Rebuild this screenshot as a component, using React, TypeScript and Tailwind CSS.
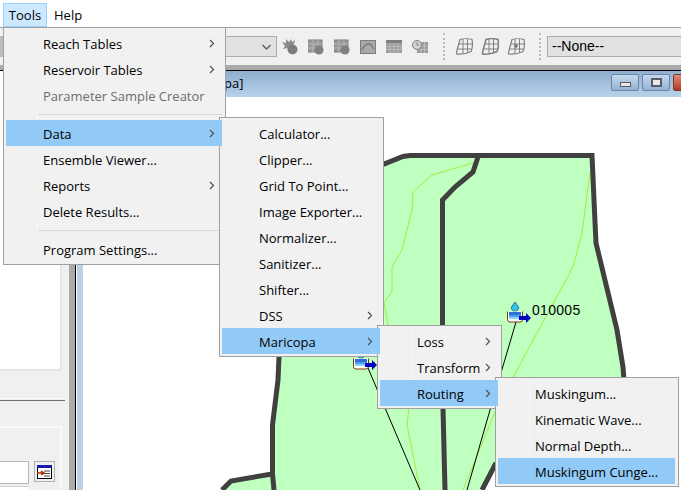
import React from "react";

const FONT = "font-['Open_Sans',sans-serif]";

function Chevron() {
  return (
    <svg width="6" height="9" viewBox="0 0 6 9" className="shrink-0">
      <polyline points="1,1 4.5,4.5 1,8" fill="none" stroke="#505050" strokeWidth="1.2" />
    </svg>
  );
}

type Item = { label?: string; sub?: boolean; active?: boolean; disabled?: boolean; sep?: boolean };

function Menu({ items, className }: { items: Item[]; className: string }) {
  return (
    <div className={`absolute border border-[#a0a0a0] bg-[#f1f1f1] pt-[2px] pb-[2px] pl-[2px] pr-[2px] ${className}`}>
      <div className="absolute left-[33px] top-[1px] bottom-[1px] w-px bg-[#f6f6f6]" />
      {items.map((it, i) =>
        it.sep ? (
          <div key={i} className="h-[12px] flex items-center pl-[32px]">
            <div className="h-px w-full bg-[#d7d7d7]" />
          </div>
        ) : (
          <div
            key={i}
            className={`h-[26px] flex items-center justify-between pl-[37px] pr-[7px] text-[13px] leading-none ${
              it.active ? "relative z-10 bg-[#91c9f7]" : ""
            } ${it.disabled ? "text-[#6d6d6d]" : "text-black"}`}
          >
            <span className="relative top-[1px] whitespace-nowrap">{it.label}</span>
            {it.sub && <Chevron />}
          </div>
        )
      )}
    </div>
  );
}

function Burst() {
  return (
    <svg width="16" height="16" viewBox="0 0 16 16" fill="#7d7d7d" className="shrink-0">
      <polygon points="0,3 4,4 4,0 7,3 9,0 10,3 13,1 12,5 9,8 8,12 5,9 1,10 3,7" fill="#8c8c8c" />
      <circle cx="10.5" cy="10.5" r="5" />
    </svg>
  );
}

function GridBall() {
  return (
    <svg width="16" height="16" viewBox="0 0 16 16" className="shrink-0">
      <rect x="0" y="1" width="14" height="12" fill="#9a9a9a" stroke="#7d7d7d" />
      <path d="M0 5h14M0 9h14M5 1v12M10 1v12" stroke="#b5b5b5" />
      <circle cx="11" cy="11" r="4.5" fill="#808080" />
    </svg>
  );
}

function Curve() {
  return (
    <svg width="16" height="14" viewBox="0 0 16 14" className="shrink-0">
      <rect x="0.5" y="0.5" width="15" height="13" fill="#a8a8a8" stroke="#7d7d7d" />
      <path d="M2 10C4 5 8 3 10 4s2 3 4 5" fill="none" stroke="#7d7d7d" strokeWidth="1.5" />
    </svg>
  );
}

function Table() {
  return (
    <svg width="16" height="13" viewBox="0 0 16 13" className="shrink-0">
      <rect x="0" y="0" width="16" height="13" fill="#a0a0a0" />
      <rect x="0" y="0" width="16" height="3" fill="#808080" />
      <path d="M0 6.5h16M0 9.5h16M4 3v10M8 3v10M12 3v10" stroke="#b9b9b9" />
    </svg>
  );
}

function ClockGrid() {
  return (
    <svg width="16" height="13" viewBox="0 0 16 13" className="shrink-0">
      <rect x="5" y="2" width="11" height="11" fill="#9c9c9c" />
      <path d="M5 6h11M5 9.5h11M9 2v11M12.5 2v11" stroke="#bdbdbd" />
      <circle cx="5" cy="5" r="4.5" fill="#d2d2d2" stroke="#7d7d7d" />
      <path d="M5 2.5V5h2" fill="none" stroke="#7d7d7d" />
    </svg>
  );
}

function Mesh({ dot, heavy }: { dot?: boolean; heavy?: boolean }) {
  return (
    <svg width="18" height="17" viewBox="0 0 18 17" className="shrink-0">
      <path
        d="M5 1.5C8 .5 14 .5 17 1.5c.8 4 .3 9-1 12-4 2-10 3-14.500 2.500C1.500 12 4 6 5 1.500Z"
        fill="#f0f0f0"
        stroke="#808080"
        strokeWidth={heavy ? 1.6 : 1.2}
      />
      <path d="M3.500 6h13.500M2 11h14.500M8 1v14.500M12.500 1v13.500" stroke="#808080" fill="none" />
      {dot && <circle cx="9" cy="8" r="1.800" fill="#707070" />}
    </svg>
  );
}

function Grip() {
  return <div className="h-[27px] w-0 border-l-2 border-dotted border-[#bababa]" />;
}

function Basin({ x, y }: { x: number; y: number }) {
  return (
    <g transform={`translate(${x} ${y})`}>
      <path d="M8 0l3.500 5a3.600 3.600 0 1 1-7 0Z" fill="#35c3e8" stroke="#17607e" strokeWidth="0.8" />
      <path d="M0.500 9.500v8a2.500 2.500 0 0 0 2.500 2.500h10a2.500 2.500 0 0 0 2.500-2.500v-8" fill="#fff" stroke="#7a3a0a" />
      <rect x="2" y="10" width="12" height="3" fill="#2f6fd8" />
      <rect x="2" y="13" width="12" height="2" fill="#4f9ff0" />
      <rect x="2" y="15" width="12" height="2" fill="#8fd4fa" />
      <rect x="12" y="14" width="8" height="4" fill="#0000c4" />
      <polygon points="19,11 24,16 19,21" fill="#0000c4" />
    </g>
  );
}

function MapDrawing() {
  const dark = "#404040";
  const light = "#aee83a";
  return (
    <svg width="598" height="393" viewBox="83 97 598 393" className="block">
      <polygon
        fill="#bfffbf"
        points="330,170 384,163 403,156 410,155 592,155 594,200 596,243 617,330 623,367 623,377 495,463 482,490 222,490 231,481 272,474 272,425 278,380 279,340"
      />
      <polygon fill="#bfffbf" points="495,377 623,377 600,420 495,463" />
      <polyline fill="none" stroke={light} strokeWidth="1" points="473,163 432,175 413,192 412,210 402,250 392,267 392,292 384,302 388,325 409,408 407,425 420,490" />
      <polyline fill="none" stroke={light} strokeWidth="1" points="590,173 582,233 573,267 513,377 495,412 463,490" />
      <polyline fill="none" stroke="#000" strokeWidth="1" points="516,322 490,410 467,490" />
      <polyline fill="none" stroke="#000" strokeWidth="1" points="368,368 420,490" />
      <g fill="none" stroke={dark} strokeWidth="5">
        <polyline points="360,170 384,164 403,156.500 410,155.500 592,155.500 594,200 596,243 617,330 623,367 624,380" />
        <polyline points="478,157 473,172 455,187 442.500,200 442.500,325 443,408 445,490" />
        <polyline points="280,340 279,357 278,380 272.500,425 272.500,474 274,490" />
        <polyline points="272,474 231,481 222,490" />
        <polyline points="496,463 482,490" />
      </g>
      <Basin x={507} y={302} />
      <Basin x={353} y={349} />
    </svg>
  );
}

export default function App() {
  return (
    <div className={`relative w-[681px] h-[490px] overflow-hidden bg-white ${FONT} flex flex-col`}>
      {/* menu bar */}
      <div className="h-[28px] shrink-0 border-b border-[#a0a0a0] flex items-start pt-[3px] pl-[3px] text-[13px] text-black">
        <div className="h-[24px] w-[44px] flex items-center justify-center bg-[#cce8ff] border border-[#99d1ff] pt-[2px]">Tools</div>
        <div className="h-[24px] flex items-center ml-[7px] pt-[2px]">Help</div>
      </div>

      {/* toolbar */}
      <div className="h-[37px] shrink-0 bg-[#f0f0f0] flex items-center overflow-hidden">
        <div className="w-[3px] shrink-0 h-[21px] bg-[#bcbcbc]" />
        <div className="ml-[97px] shrink-0 w-[177px] h-[21px] border border-[#adadad] bg-[#e1e1e1] flex items-center justify-end pr-[5px]">
          <svg width="9" height="6" viewBox="0 0 9 6">
            <polyline points="0.500,1 4.500,5 8.500,1" fill="none" stroke="#505050" strokeWidth="1.200" />
          </svg>
        </div>
        <div className="ml-[5px] shrink-0 flex items-center gap-[10px]">
          <Burst />
          <GridBall />
          <GridBall />
          <Curve />
          <Table />
          <ClockGrid />
        </div>
        <div className="ml-[15px] shrink-0"><Grip /></div>
        <div className="ml-[10px] shrink-0 flex items-center gap-[8px]">
          <Mesh />
          <Mesh heavy />
          <Mesh dot />
        </div>
        <div className="ml-[14px] shrink-0"><Grip /></div>
        <div className="ml-[6px] w-[200px] shrink-0 h-[21px] border border-[#adadad] bg-[#e1e1e1] flex items-center pl-[4px] text-[14px] text-black font-['Liberation_Sans',sans-serif]">
          --None--
        </div>
      </div>
      <div className="h-[5px] shrink-0 bg-[#ababab]" />
      <div className="h-px shrink-0 bg-black" />

      {/* workspace */}
      <div className="flex-1 flex min-h-0">
        {/* left panel */}
        <div className="w-[69px] shrink-0 bg-[#f0f0f0] flex flex-col">
          <div className="h-[300px] mr-[7px] bg-white border-r-2 border-b-2 border-[#e6e6e6]" />
          <div className="mt-[27px] mr-[4px] h-[3px] border-t border-t-[#fafafa] border-b border-b-[#6e6e6e]" />
          <div className="mt-[25px] mr-[7px] flex-1 border-t-2 border-r-2 border-[#fafafa] flex flex-col pt-[33px]">
            <div className="flex items-start">
              <div className="w-[29px] h-[23px] bg-white border border-l-0 border-[#b4b4b4]" />
              <div className="ml-[5px] w-[21px] h-[21px] border border-[#b0b0b0] bg-[#f0f0f0] flex items-center justify-center">
                <svg width="15" height="14" viewBox="0 0 15 14">
                  <rect x="0.500" y="0.500" width="14" height="13" fill="#fff" stroke="#000" />
                  <rect x="0" y="0" width="15" height="3" fill="#1a1ab0" />
                  <path d="M7 6h6M7 8.500h6M7 11h6" stroke="#444" />
                  <path d="M0 8h6M4 6l3 2-3 2" stroke="#a33000" strokeWidth="1.500" fill="none" />
                </svg>
              </div>
            </div>
            <div className="mt-[2px] w-[29px] h-[4px] bg-white border-t border-[#d0d0d0]" />
          </div>
        </div>
        <div className="w-[6px] shrink-0 bg-[#ababab]" />
        <div className="w-px shrink-0 bg-black" />
        <div className="w-px shrink-0 bg-white" />

        {/* MDI child */}
        <div className="flex-1 min-w-0 flex flex-col">
          <div className="h-[26px] shrink-0 bg-gradient-to-b from-[#8fadcf] to-[#b9d2ea] flex items-center overflow-hidden">
            <span className="ml-[147px] text-[13px] text-black">pa]</span>
            <div className="ml-auto flex items-center gap-[3px] -mr-[12px] pb-[3px]">
              <div className="w-[28px] shrink-0 h-[17px] rounded-[2px] border border-[#6c85a5] bg-gradient-to-b from-[#c4d8ec] to-[#93b3d4] flex items-center justify-center">
                <div className="w-[11px] h-[5px] bg-[#e8e8e8] border border-[#555c68] mt-[3px]" />
              </div>
              <div className="w-[28px] shrink-0 h-[17px] rounded-[2px] border border-[#6c85a5] bg-gradient-to-b from-[#c4d8ec] to-[#93b3d4] flex items-center justify-center">
                <div className="w-[11px] h-[9px] bg-[#e8e8e8] border-2 border-[#555c68]" />
              </div>
              <div className="w-[20px] shrink-0 h-[17px] rounded-[2px] border border-[#7a3a30] bg-gradient-to-b from-[#e08a78] to-[#b5371c]" />
            </div>
          </div>
          <div className="flex-1 min-h-0 flex">
            <div className="w-[6px] shrink-0 bg-[#b9d2ea]" />
            <div className="relative flex-1 min-w-0 bg-white overflow-hidden">
              <MapDrawing />
              <span className="absolute left-[449px] top-[206px] text-[14px] tracking-[0.3px] leading-none text-black font-['Liberation_Sans',sans-serif]">010005</span>
            </div>
          </div>
        </div>
      </div>

      {/* menus */}
      <Menu
        className="left-[3px] top-[27px] w-[223px] !pr-[3px]"
        items={[
          { label: "Reach Tables", sub: true },
          { label: "Reservoir Tables", sub: true },
          { label: "Parameter Sample Creator", disabled: true },
          { sep: true },
          { label: "Data", sub: true, active: true },
          { label: "Ensemble Viewer..." },
          { label: "Reports", sub: true },
          { label: "Delete Results..." },
          { sep: true },
          { label: "Program Settings..." },
        ]}
      />
      <Menu
        className="left-[219px] top-[117px] w-[165px] !pr-[3px]"
        items={[
          { label: "Calculator..." },
          { label: "Clipper..." },
          { label: "Grid To Point..." },
          { label: "Image Exporter..." },
          { label: "Normalizer..." },
          { label: "Sanitizer..." },
          { label: "Shifter..." },
          { label: "DSS", sub: true },
          { label: "Maricopa", sub: true, active: true },
        ]}
      />
      <Menu
        className="left-[377px] top-[325px] w-[125px] !pr-[3px]"
        items={[
          { label: "Loss", sub: true },
          { label: "Transform", sub: true },
          { label: "Routing", sub: true, active: true },
        ]}
      />
      <Menu
        className="left-[495px] top-[377px] w-[184px] !pr-[3px]"
        items={[
          { label: "Muskingum..." },
          { label: "Kinematic Wave..." },
          { label: "Normal Depth..." },
          { label: "Muskingum Cunge...", active: true },
        ]}
      />
    </div>
  );
}
